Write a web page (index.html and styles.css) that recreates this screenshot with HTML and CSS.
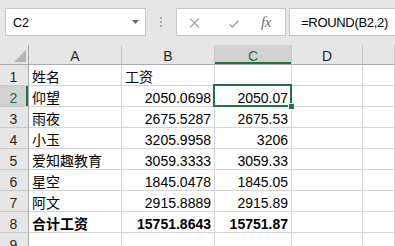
FILE: index.html
```html
<!DOCTYPE html>
<html lang="zh">
<head>
<meta charset="utf-8">
<link rel="stylesheet" href="styles.css">
</head>
<body>
<div class="app">
  <div class="toolbar">
    <div class="namebox">
      <span class="ref">C2</span>
      <svg class="arrow" width="7" height="4" viewBox="0 0 7 4"><path d="M0 0H7L3.5 4Z" fill="#6b6b6b"/></svg>
    </div>
    <div class="grip"><i></i><i></i><i></i></div>
    <div class="btns">
      <svg class="ico-x" width="11" height="10" viewBox="0 0 11 10"><path d="M1 0.5L10 9.5M10 0.5L1 9.5" stroke="#a8a8a8" stroke-width="1.3" fill="none"/></svg>
      <svg class="ico-ok" width="10" height="8" viewBox="0 0 10 8"><path d="M0.6 4.2L3.6 7.2L9.4 0.6" stroke="#a8a8a8" stroke-width="1.5" fill="none"/></svg>
      <span class="fx">fx</span>
    </div>
    <div class="formula">=ROUND(B2,2)</div>
  </div>
  <div class="sheet">
    <div class="c corner"><svg width="12" height="12" viewBox="0 0 12 12"><path d="M12 0V12H0Z" fill="#b4b4b4"/></svg></div>
    <div class="c ch">A</div>
    <div class="c ch">B</div>
    <div class="c ch chsel">C</div>
    <div class="c ch">D</div>
    <div class="c ch"></div>

    <div class="c rh">1</div>
    <div class="c">姓名</div>
    <div class="c">工资</div>
    <div class="c"></div>
    <div class="c"></div>
    <div class="c"></div>

    <div class="c rh rhsel">2</div>
    <div class="c">仰望</div>
    <div class="c num">2050.0698</div>
    <div class="c num active">2050.07<span class="selbox"><span class="handle"></span></span></div>
    <div class="c"></div>
    <div class="c"></div>

    <div class="c rh">3</div>
    <div class="c">雨夜</div>
    <div class="c num">2675.5287</div>
    <div class="c num">2675.53</div>
    <div class="c"></div>
    <div class="c"></div>

    <div class="c rh">4</div>
    <div class="c">小玉</div>
    <div class="c num">3205.9958</div>
    <div class="c num">3206</div>
    <div class="c"></div>
    <div class="c"></div>

    <div class="c rh">5</div>
    <div class="c">爱知趣教育</div>
    <div class="c num">3059.3333</div>
    <div class="c num">3059.33</div>
    <div class="c"></div>
    <div class="c"></div>

    <div class="c rh">6</div>
    <div class="c">星空</div>
    <div class="c num">1845.0478</div>
    <div class="c num">1845.05</div>
    <div class="c"></div>
    <div class="c"></div>

    <div class="c rh">7</div>
    <div class="c">阿文</div>
    <div class="c num">2915.8889</div>
    <div class="c num">2915.89</div>
    <div class="c"></div>
    <div class="c"></div>

    <div class="c rh">8</div>
    <div class="c b">合计工资</div>
    <div class="c num b">15751.8643</div>
    <div class="c num b">15751.87</div>
    <div class="c"></div>
    <div class="c"></div>

    <div class="c rh">9</div>
    <div class="c"></div>
    <div class="c"></div>
    <div class="c"></div>
    <div class="c"></div>
    <div class="c"></div>
  </div>
</div>
</body>
</html>
```

FILE: styles.css
```css
html, body {
  margin: 0;
  padding: 0;
  background: #fff;
}
.app {
  width: 395px;
  height: 246px;
  overflow: hidden;
  font-family: "Liberation Sans", "Noto Sans CJK SC", sans-serif;
}
.toolbar {
  height: 45px;
  background: #e6e6e6;
  display: flex;
  align-items: flex-start;
  padding-top: 8px;
  box-sizing: border-box;
}
.namebox {
  margin-left: 5px;
  width: 141px;
  height: 28px;
  box-sizing: border-box;
  border: 1px solid #c6c6c6;
  background: #fff;
  display: flex;
  align-items: center;
  justify-content: space-between;
  padding: 0 6px 0 7px;
}
.ref {
  font-size: 12.5px;
  color: #000;
  padding-top: 1px;
}
.arrow {
  display: block;
}
.grip {
  width: 30px;
  height: 28px;
  display: flex;
  flex-direction: column;
  align-items: center;
  justify-content: center;
  gap: 2px;
}
.grip i {
  display: block;
  width: 2px;
  height: 2px;
  background: #a9a9a9;
}
.btns {
  width: 110px;
  height: 28px;
  box-sizing: border-box;
  border: 1px solid #c6c6c6;
  background: #fff;
  display: flex;
  align-items: center;
  padding-left: 12px;
}
.ico-x {
  display: block;
  margin-top: 1px;
}
.ico-ok {
  display: block;
  margin-left: 29px;
  margin-top: 3px;
}
.fx {
  margin-left: 22px;
  font-family: "Liberation Serif", serif;
  font-style: italic;
  font-size: 15px;
  color: #6f6f6f;
  letter-spacing: -0.5px;
}
.formula {
  margin-left: 3px;
  flex: 1;
  margin-right: -2px;
  height: 28px;
  box-sizing: border-box;
  border: 1px solid #c6c6c6;
  background: #fff;
  font-size: 13px;
  letter-spacing: -0.3px;
  color: #000;
  display: flex;
  align-items: center;
  padding-left: 11px;
  padding-top: 1px;
}
.sheet {
  display: grid;
  grid-template-columns: 29px 93px 93px 77px 71px 1fr;
  grid-template-rows: 20px repeat(9, 21px);
}
.c {
  box-sizing: border-box;
  border-right: 1px solid #d4d4d4;
  border-bottom: 1px solid #d4d4d4;
  background: #fff;
  font-size: 14px;
  line-height: 15px;
  color: #000;
  display: flex;
  align-items: flex-end;
  padding: 0 3px 0 3px;
  white-space: nowrap;
}
.num {
  justify-content: flex-end;
  padding-right: 3px;
}
.b {
  font-weight: bold;
}
.corner {
  background: #e6e6e6;
  border-right: 1px solid #ababab;
  border-bottom: 1px solid #ababab;
  padding: 0 2px 2px 0;
  justify-content: flex-end;
}
.corner svg {
  display: block;
}
.ch {
  background: #e6e6e6;
  border-right: 1px solid #c8c8c8;
  border-bottom: 1px solid #ababab;
  justify-content: center;
  color: #262626;
}
.chsel {
  background: #d2d2d2;
  color: #217346;
  box-shadow: inset 0 -2px 0 #217346;
}
.rh {
  background: #e6e6e6;
  border-right: 1px solid #ababab;
  border-bottom: 1px solid #c8c8c8;
  justify-content: center;
  color: #262626;
  padding: 0 1px 0 0;
}
.rhsel {
  background: #d2d2d2;
  color: #217346;
  box-shadow: inset -2px 0 0 #217346;
}
.active {
  position: relative;
}
.selbox {
  position: absolute;
  left: -2px;
  top: -2px;
  width: 79px;
  height: 23px;
  box-sizing: border-box;
  border: 2px solid #217346;
  z-index: 2;
}
.handle {
  position: absolute;
  left: 73px;
  top: 17px;
  width: 7px;
  height: 7px;
  box-sizing: border-box;
  background: #217346;
  border: 1px solid #fff;
}
```
